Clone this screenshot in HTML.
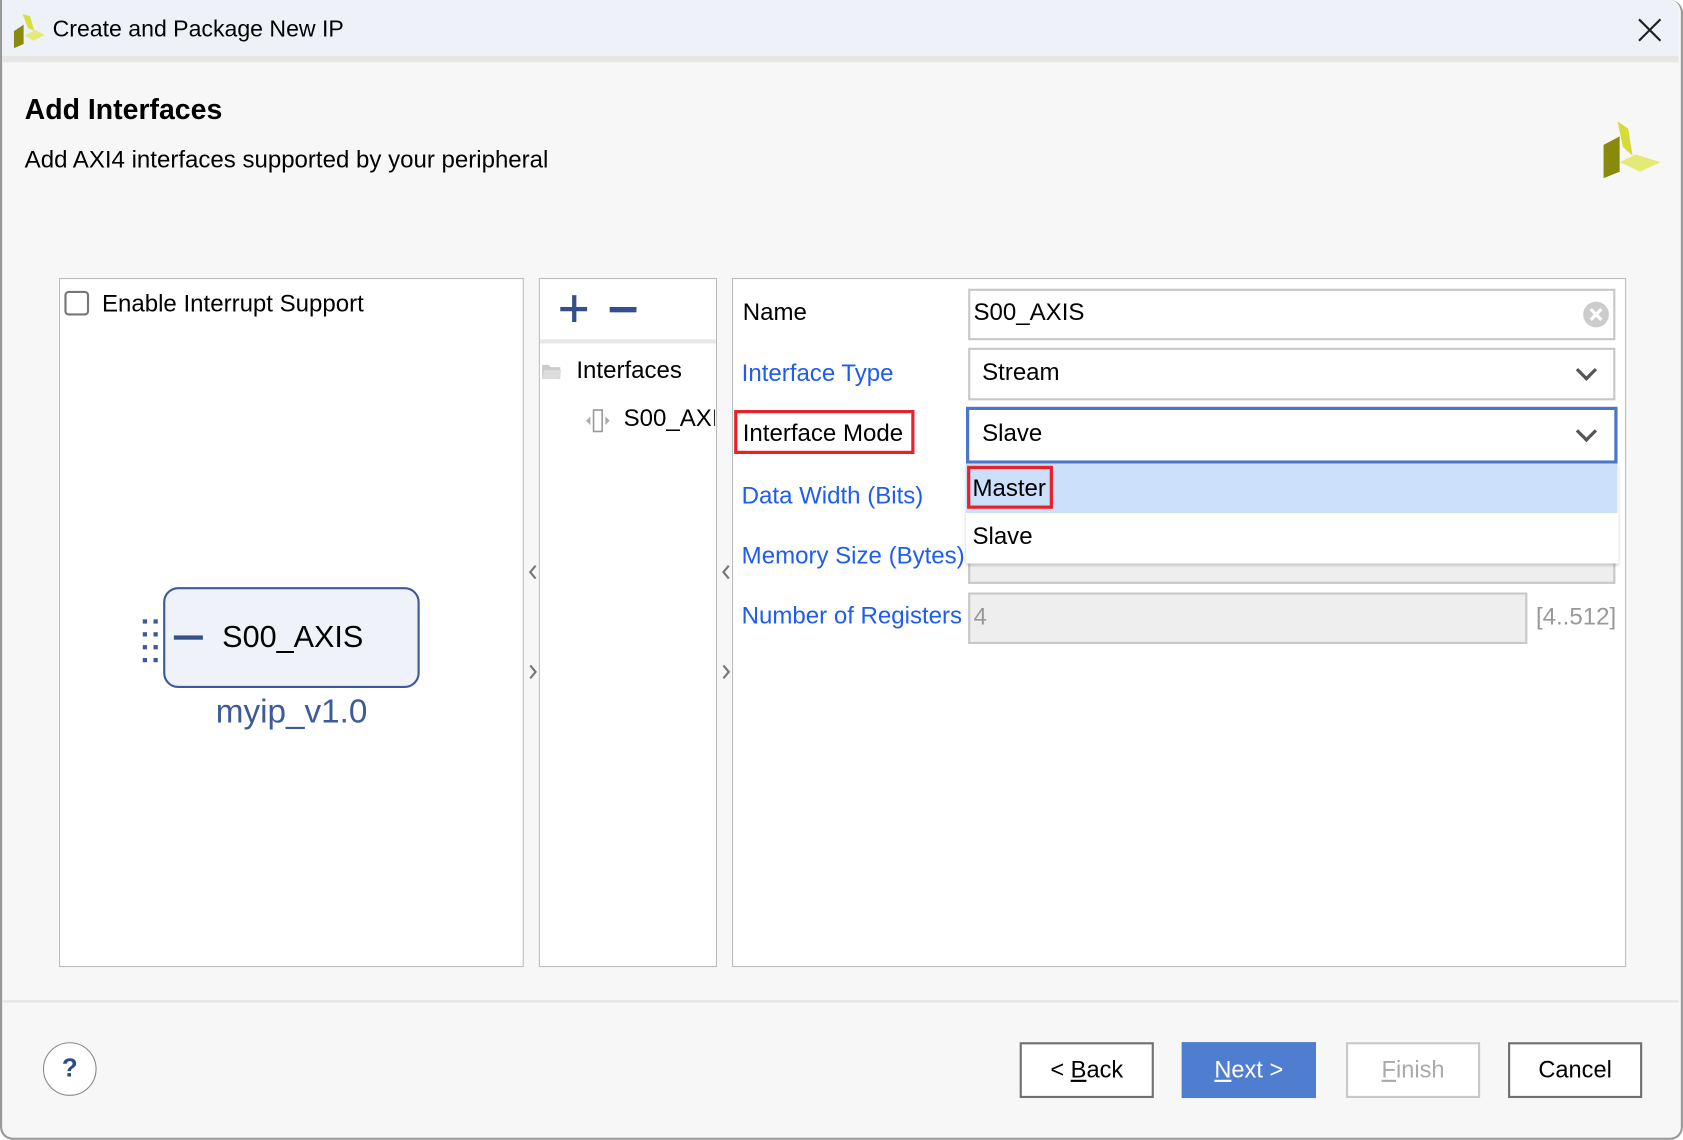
<!DOCTYPE html>
<html><head><meta charset="utf-8"><style>
html,body{margin:0;padding:0;width:1683px;height:1140px;overflow:hidden;background:#fff;}
#w{position:absolute;left:0;top:0;width:1568px;height:1062px;transform:scale(1.07334);transform-origin:0 0;font-family:"Liberation Sans",sans-serif;color:#000;}
.a{position:absolute;}
.t{position:absolute;font-size:22.4px;white-space:nowrap;line-height:1;}
.blue{color:#1f5cf0;}
.fld{position:absolute;background:#fff;border:2px solid #c8c8c8;box-sizing:border-box;}
.btn{position:absolute;top:971px;height:52px;width:125px;box-sizing:border-box;border:2px solid #707070;background:#fff;font-size:22px;text-align:center;line-height:48px;}
.chev{position:absolute;width:11px;height:11px;border-right:3px solid #555;border-bottom:3px solid #555;transform:rotate(45deg);}
</style></head><body><div id="w">
<div class="a" style="left:0;top:0;width:1568px;height:1062px;background:#f7f7f7;border-left:2px solid #999;border-right:2px solid #999;border-bottom:2px solid #999;border-radius:0 12px 12px 12px;box-sizing:border-box;"></div>
<div class="a" style="left:2px;top:0;width:1562px;height:52px;background:#eef2f8;border-radius:0 12px 0 0;"></div>
<div class="a" style="left:2px;top:52px;width:1562px;height:6px;background:#e6e6e6;"></div>
<svg class="a" style="left:10px;top:10px" width="36" height="36" viewBox="0 0 36 36"><polygon points="11,3 18,5 22,19 16,16" fill="#d8df3a"/><polygon points="3,19 12,13 12,31 3,35" fill="#8a8a10"/><polygon points="13,23 23,18 32,23 21,28" fill="#e5ea7a"/></svg>
<div class="t" style="left:49px;top:17px;font-size:21.5px;">Create and Package New IP</div>
<svg class="a" style="left:1524px;top:15px" width="26" height="26"><path d="M3 3L23 23M23 3L3 23" stroke="#222" stroke-width="2"/></svg>
<div class="t" style="left:23px;top:89px;font-size:26.5px;font-weight:bold;">Add Interfaces</div>
<div class="t" style="left:23px;top:138px;">Add AXI4 interfaces supported by your peripheral</div>
<svg class="a" style="left:1490px;top:110px" width="60" height="60" viewBox="0 0 60 60"><polygon points="17,3 27,10 31,35 22,27" fill="#d5dc36"/><polygon points="4,25 19,17 19,50 4,56" fill="#888a0c"/><polygon points="19,41 34,34 57,41 38,50" fill="#e5e978"/></svg>

<div class="a" style="left:55px;top:259px;width:433px;height:642px;background:#fff;border:1px solid #bcbcbc;box-sizing:border-box;"></div>
<div class="a" style="left:60px;top:271px;width:23px;height:23px;border:2px solid #777;border-radius:4px;box-sizing:border-box;background:#fff;"></div>
<div class="t" style="left:95px;top:272px;">Enable Interrupt Support</div>
<div class="a" style="left:152px;top:547px;width:239px;height:94px;background:#eff3f9;border:2px solid #3d5b9b;border-radius:14px;box-sizing:border-box;"></div>
<div class="a" style="left:133px;top:577px;width:4px;height:4px;background:#3d5b9b;box-shadow:10px 0 #3d5b9b,0 12px #3d5b9b,10px 12px #3d5b9b,0 24px #3d5b9b,10px 24px #3d5b9b,0 36px #3d5b9b,10px 36px #3d5b9b"></div>
<div class="a" style="left:162px;top:592px;width:27px;height:4px;background:#34508a;"></div>
<div class="t" style="left:207px;top:580px;font-size:28.5px;">S00_AXIS</div>
<div class="t" style="left:201px;top:647px;font-size:31px;color:#3d5b9b;">myip_v1.0</div>

<div class="a" style="left:502px;top:259px;width:166px;height:642px;background:#fff;border:1px solid #bcbcbc;box-sizing:border-box;"></div>
<div class="a" style="left:503px;top:316px;width:164px;height:4px;background:#e8e8e8;"></div>
<div class="a" style="left:522px;top:286px;width:25px;height:4px;background:#34508a;"></div>
<div class="a" style="left:533px;top:275px;width:4px;height:25px;background:#34508a;"></div>
<div class="a" style="left:568px;top:286px;width:25px;height:5px;background:#34508a;"></div>
<svg class="a" style="left:504px;top:337px" width="20" height="18"><path d="M1 3h6l2 2h9v11H1z" fill="#ccc"/><path d="M3 8h16l-2 8H1z" fill="#ddd"/></svg>
<div class="t" style="left:537px;top:334px;">Interfaces</div>
<svg class="a" style="left:545px;top:381px" width="24" height="22"><rect x="8" y="1" width="8" height="20" fill="none" stroke="#999" stroke-width="1.5"/><path d="M5 7v8l-4-4zM19 7v8l4-4z" fill="#aaa"/></svg>
<div class="a" style="left:580px;top:370px;width:86px;height:40px;overflow:hidden;"><div class="t" style="left:1px;top:9px;">S00_AXIS</div></div>
<svg class="a" style="left:492px;top:524px" width="10" height="18"><path d="M7 3L2 9l5 6" stroke="#777" stroke-width="2" fill="none"/></svg>
<svg class="a" style="left:492px;top:617px" width="10" height="18"><path d="M2 3l5 6-5 6" stroke="#777" stroke-width="2" fill="none"/></svg>
<svg class="a" style="left:672px;top:524px" width="10" height="18"><path d="M7 3L2 9l5 6" stroke="#777" stroke-width="2" fill="none"/></svg>
<svg class="a" style="left:672px;top:617px" width="10" height="18"><path d="M2 3l5 6-5 6" stroke="#777" stroke-width="2" fill="none"/></svg>

<div class="a" style="left:682px;top:259px;width:833px;height:642px;background:#fff;border:1px solid #bcbcbc;box-sizing:border-box;"></div>
<div class="t" style="left:692px;top:280px;">Name</div>
<div class="fld" style="left:902px;top:269px;width:603px;height:48px;"></div>
<div class="t" style="left:907px;top:280px;">S00_AXIS</div>
<svg class="a" style="left:1473px;top:279px" width="28" height="28"><circle cx="14" cy="14" r="12" fill="#ccc"/><path d="M9 9l10 10M19 9L9 19" stroke="#fff" stroke-width="3"/></svg>
<div class="t blue" style="left:691px;top:337px;">Interface Type</div>
<div class="fld" style="left:902px;top:324px;width:603px;height:49px;"></div>
<div class="t" style="left:915px;top:336px;">Stream</div>
<div class="chev" style="left:1471px;top:338px;"></div>
<div class="a" style="left:684px;top:382px;width:168px;height:41px;border:3px solid #e8202a;box-sizing:border-box;"></div>
<div class="t" style="left:692px;top:393px;">Interface Mode</div>
<div class="a" style="left:900px;top:379px;width:607px;height:53px;border:3px solid #4a77c9;background:#fff;box-sizing:border-box;"></div>
<div class="t" style="left:915px;top:393px;">Slave</div>
<div class="chev" style="left:1471px;top:395px;"></div>
<div class="t blue" style="left:691px;top:451px;">Data Width (Bits)</div>
<div class="t blue" style="left:691px;top:507px;">Memory Size (Bytes)</div>
<div class="fld" style="left:902px;top:500px;width:603px;height:44px;background:#eee;"></div>
<div class="a" style="left:900px;top:432px;width:608px;height:93px;background:#fff;box-shadow:0 2px 3px rgba(0,0,0,0.2);"></div>
<div class="a" style="left:900px;top:432px;width:607px;height:46px;background:#cce0fc;"></div>
<div class="a" style="left:901px;top:434px;width:80px;height:40px;border:3px solid #e8202a;box-sizing:border-box;"></div>
<div class="t" style="left:906px;top:444px;">Master</div>
<div class="t" style="left:906px;top:489px;">Slave</div>
<div class="t blue" style="left:691px;top:563px;">Number of Registers</div>
<div class="fld" style="left:902px;top:552px;width:521px;height:48px;background:#eee;"></div>
<div class="t" style="left:907px;top:564px;color:#999;">4</div>
<div class="t" style="left:1431px;top:564px;color:#999;">[4..512]</div>

<div class="a" style="left:2px;top:932px;width:1562px;height:2px;background:#e4e4e4;"></div>
<div class="a" style="left:40px;top:971px;width:50px;height:50px;border:1px solid #888;border-radius:50%;background:#fff;box-sizing:border-box;text-align:center;line-height:48px;font-size:24px;font-weight:bold;color:#2c4a8a;">?</div>
<div class="btn" style="left:950px;">&lt; <u>B</u>ack</div>
<div class="btn" style="left:1101px;background:#4f7dd0;border-color:#4f7dd0;color:#fff;"><u>N</u>ext &gt;</div>
<div class="btn" style="left:1254px;border-color:#c8c8c8;color:#aaa;"><u>F</u>inish</div>
<div class="btn" style="left:1405px;">Cancel</div>
</div></body></html>
